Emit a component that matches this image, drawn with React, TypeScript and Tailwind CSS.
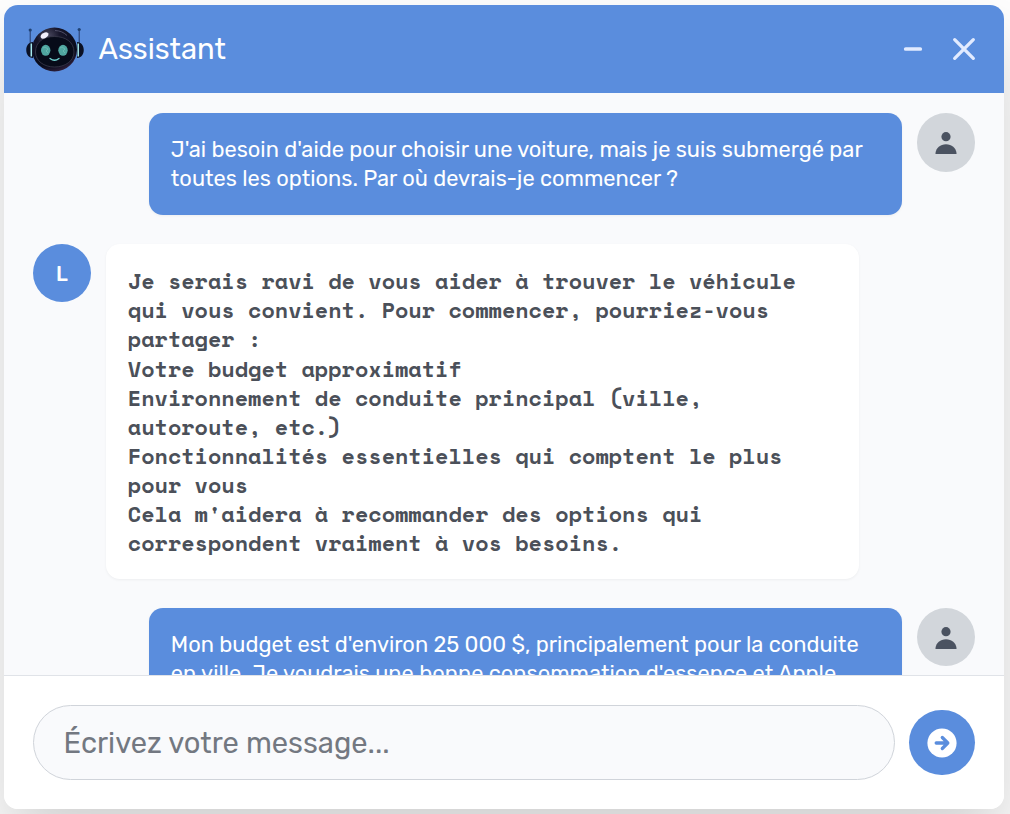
import type { ReactNode } from "react"

const REPLY_PARAGRAPHS = [
  "Je serais ravi de vous aider à trouver le véhicule qui vous convient. Pour commencer, pourriez-vous partager :",
  "Votre budget approximatif",
  "Environnement de conduite principal (ville, autoroute, etc.)",
  "Fonctionnalités essentielles qui comptent le plus pour vous",
  "Cela m'aidera à recommander des options qui correspondent vraiment à vos besoins.",
]

const RobotLogo = () => (
  <svg viewBox="0 0 60 48" className="h-12 w-[60px]" aria-hidden="true">
    <defs>
      <radialGradient id="head" cx="0.36" cy="0.2" r="0.85">
        <stop offset="0" stopColor="#4b4a60" />
        <stop offset="0.3" stopColor="#17162b" />
        <stop offset="0.8" stopColor="#080b1c" />
        <stop offset="1" stopColor="#35233f" />
      </radialGradient>
    </defs>
    <path d="M5.2 5v14M54.2 5v14" stroke="#263b6b" strokeWidth="1" />
    <circle cx="5.2" cy="5" r="1.6" fill="#1f4275" />
    <circle cx="54.2" cy="4.5" r="1.6" fill="#1f4275" />
    <path d="M8 17C-1 17-1 33 8 33ZM52 17c9 0 9 16 0 16Z" fill="#0b1125" />
    <ellipse cx="29.5" cy="24.5" rx="22.5" ry="22" fill="url(#head)" />
    <path d="M6.3 18.500v13M53.200 18.500v13" stroke="#a5e9ee" strokeWidth="1.5" />
    <path
      d="M10.5 27c0-10 8-15.500 19-15.500S49 17 49 27c0 9-9 15-19.500 15S10.500 36 10.500 27Z"
      fill="#070b19"
      stroke="#3b3b4d"
      strokeWidth="0.8"
    />
    <ellipse cx="19.500" cy="10.500" rx="4.200" ry="2.600" fill="#f1effb" transform="rotate(-32 19.500 10.500)" />
    <path d="M30 5.500c5 .2 9 2 12 5" fill="none" stroke="#5d5c75" strokeWidth="0.8" />
    <ellipse cx="20.700" cy="25.300" rx="4.700" ry="5.500" fill="#4fa5a0" />
    <ellipse cx="38" cy="25.300" rx="4.700" ry="5.500" fill="#4fa5a0" />
    <path d="m18 23 2-1 3 2-2 2 2 2m12-5 2-1 3 2-2 2 2 2" fill="none" stroke="#77c6bb" strokeWidth="0.6" />
    <path d="M25 33.500c2.800 2.200 6.200 2.200 9 0" fill="none" stroke="#71d4d2" strokeWidth="1.300" strokeLinecap="round" />
  </svg>
)

const UserAvatar = () => (
  <div className="flex h-[58.5px] w-[58px] shrink-0 items-center justify-center rounded-full bg-[#d2d6db] pt-px">
    <svg viewBox="0 0 22 22" className="size-[22px]" fill="#4b5361" aria-hidden="true">
      <circle cx="11" cy="4.700" r="4.600" />
      <path d="M.5 22v-1C1 16 5.300 12.300 11 12.300S21 16 21.500 21v1Z" />
    </svg>
  </div>
)

const UserMessage = ({ children }: { children: ReactNode }) => (
  <div className="flex items-start justify-end gap-[15px]">
    <p className="w-[753px] rounded-[14px] bg-[#5a8ddd] px-[21.84px] pt-[22.3px] pb-[21.3px] text-[21.84px] leading-[29.12px] text-white shadow-[0_1px_3px_rgba(0,0,0,0.05)]">
      {children}
    </p>
    <UserAvatar />
  </div>
)

export default function App() {
  return (
    <main className="h-[814px] w-[1010px] overflow-hidden bg-white pt-[5px] pl-1 font-['Rubik','Roboto',sans-serif]">
      <section className="flex h-[804px] w-[1000px] flex-col rounded-[14px] bg-white shadow-[0_36px_72px_rgba(0,0,0,0.19)]">
        <header className="flex h-[88px] shrink-0 items-center rounded-t-[14px] bg-[#5a8ddd] pl-[21px] text-white">
          <RobotLogo />
          <h1 className="ml-[13.500px] pt-0.5 text-[29.12px] leading-none">Assistant</h1>
          <button type="button" aria-label="Réduire" className="ml-auto">
            <svg viewBox="0 0 24 24" className="size-6" aria-hidden="true">
              <path d="M4.700 12h14.600" stroke="#e2ebff" strokeWidth="3.700" strokeLinecap="round" />
            </svg>
          </button>
          <button type="button" aria-label="Fermer" className="mr-7 ml-[27px]">
            <svg viewBox="0 0 24 24" className="size-6" aria-hidden="true">
              <path d="m2.700 2.700 18.600 18.600m0-18.600-18.600 18.600" stroke="#e2ebff" strokeWidth="3.300" strokeLinecap="round" />
            </svg>
          </button>
        </header>

        <div className="flex min-h-0 flex-1 flex-col gap-[29.12px] overflow-hidden bg-[#f9fafc] px-[29px] pt-5">
          <UserMessage>
            J'ai besoin d'aide pour choisir une voiture, mais je suis submergé par toutes les options. Par où
            devrais-je commencer ?
          </UserMessage>

          <div className="flex items-start gap-[15px]">
            <div className="flex h-[58.5px] w-[58px] shrink-0 items-center justify-center rounded-full bg-[#5a8ddd] pt-0.5 text-[20.4px] font-medium text-white">
              L
            </div>
            <div className="w-[753px] rounded-[14px] bg-white px-[21.84px] pt-[23.2px] pb-[20.4px] font-['Space_Mono','Liberation_Mono',monospace] text-[21.84px] leading-[29.12px] font-bold text-[#4b5059] shadow-[0_1px_3px_rgba(0,0,0,0.05)]">
              {REPLY_PARAGRAPHS.map((text) => (
                <p key={text}>{text}</p>
              ))}
            </div>
          </div>

          <UserMessage>
            Mon budget est d'environ 25 000 $, principalement pour la conduite en ville. Je voudrais une bonne
            consommation d'essence et Apple
          </UserMessage>
        </div>

        <footer className="flex h-[134px] shrink-0 items-center gap-[14px] rounded-b-[14px] border-t border-[#e0e3e8] bg-white px-[29px]">
          <input
            type="text"
            placeholder="Écrivez votre message..."
            className="h-[75px] w-[862px] rounded-full border border-[#d0d4da] bg-[#f9fafc] px-[29.500px] text-[29.12px] outline-none placeholder:text-[#737881]"
          />
          <button
            type="button"
            aria-label="Envoyer"
            className="flex h-[65px] w-[66px] shrink-0 items-center justify-center rounded-full bg-[#5a8ddd]"
          >
            <svg viewBox="0 0 30 30" className="size-[30px]" fill="none" aria-hidden="true">
              <circle cx="15" cy="15" r="14.600" fill="#fff" />
              <path
                d="M9.200 15h11.600m-5.500-5.500 5.500 5.500-5.500 5.500"
                stroke="#5a8ddd"
                strokeWidth="3.300"
                strokeLinecap="round"
                strokeLinejoin="round"
              />
            </svg>
          </button>
        </footer>
      </section>
    </main>
  )
}
